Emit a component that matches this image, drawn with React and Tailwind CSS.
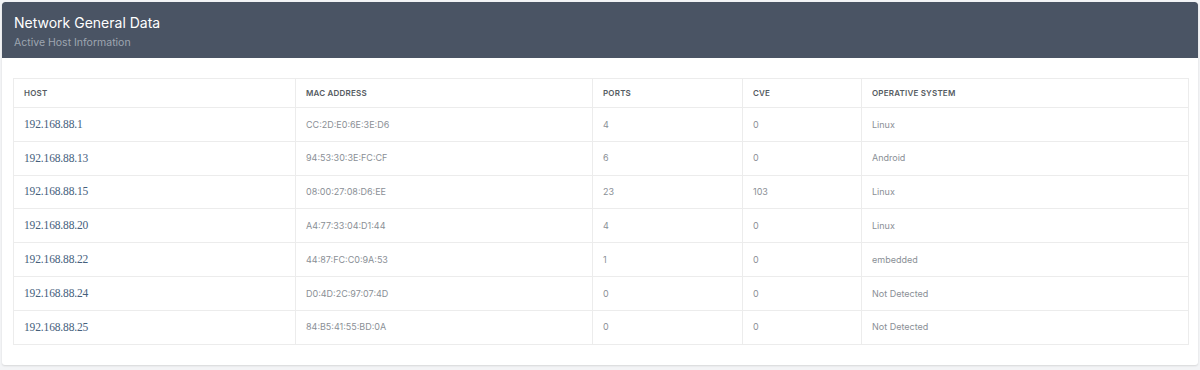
import React from "react";

const rows = [
  ["192.168.88.1", "CC:2D:E0:6E:3E:D6", "4", "0", "Linux"],
  ["192.168.88.13", "94:53:30:3E:FC:CF", "6", "0", "Android"],
  ["192.168.88.15", "08:00:27:08:D6:EE", "23", "103", "Linux"],
  ["192.168.88.20", "A4:77:33:04:D1:44", "4", "0", "Linux"],
  ["192.168.88.22", "44:87:FC:C0:9A:53", "1", "0", "embedded"],
  ["192.168.88.24", "D0:4D:2C:97:07:4D", "0", "0", "Not Detected"],
  ["192.168.88.25", "84:B5:41:55:BD:0A", "0", "0", "Not Detected"],
];

const font = { fontFamily: "Inter, 'Open Sans', sans-serif" };

export default function App() {
  return (
    <div className="w-[1200px] h-[370px] bg-[#f3f4f6] p-[2px]" style={font}>
      <div className="bg-white rounded-[3px] shadow-[0_1px_2px_rgba(0,0,0,0.12)] h-[363px] flex flex-col overflow-hidden">
        <div className="bg-[#4a5464] h-[56px] px-[12px] pt-[11px] rounded-t-[3px]">
          <div className="text-white text-[14px] leading-[19px]">Network General Data</div>
          <div className="text-[#9ea6b1] text-[10.5px] leading-[15px] mt-[3px]">Active Host Information</div>
        </div>
        <div className="px-[11px] pt-[20px]">
          <table className="border-collapse w-[1175px] table-fixed">
            <colgroup>
              <col className="w-[282px]" />
              <col className="w-[297px]" />
              <col className="w-[150px]" />
              <col className="w-[119px]" />
              <col className="w-[327px]" />
            </colgroup>
            <thead>
              <tr className="h-[29px]">
                {["HOST", "MAC ADDRESS", "PORTS", "CVE", "OPERATIVE SYSTEM"].map((h) => (
                  <th
                    key={h}
                    className="border border-[#ececec] text-left px-[10px] text-[8px] font-semibold text-[#555b62] tracking-[0.2px]"
                  >
                    {h}
                  </th>
                ))}
              </tr>
            </thead>
            <tbody>
              {rows.map((r) => (
                <tr key={r[0]} className="h-[33.8px]">
                  <td
                    className="border border-[#ececec] px-[10px] text-[11.5px] tracking-[-0.15px] text-[#45607c]"
                    style={{ fontFamily: "'Liberation Serif', 'DejaVu Serif', serif" }}
                  >
                    {r[0]}
                  </td>
                  {r.slice(1).map((c, i) => (
                    <td key={i} className="border border-[#ececec] px-[10px] text-[9px] text-[#8a8f96]">
                      {c}
                    </td>
                  ))}
                </tr>
              ))}
            </tbody>
          </table>
        </div>
      </div>
    </div>
  );
}
